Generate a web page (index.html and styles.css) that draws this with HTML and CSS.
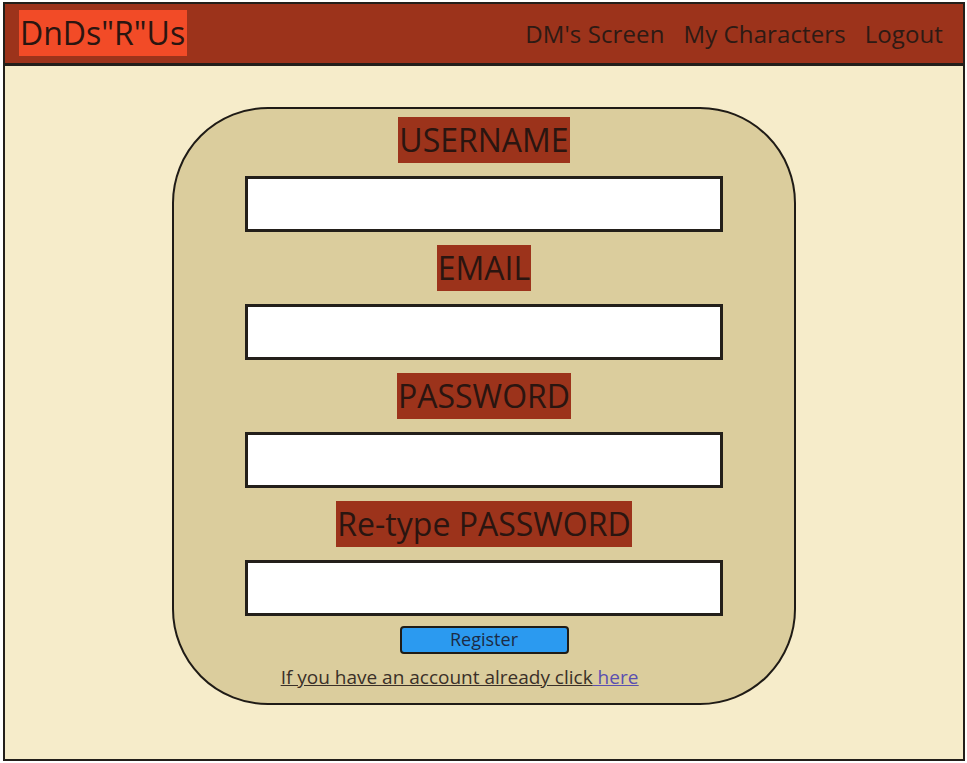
FILE: index.html
```html
<!DOCTYPE html>
<html>
<head>
<meta charset="utf-8">
<link rel="stylesheet" href="styles.css">
</head>
<body>
<div class="frame">
  <header class="topbar">
    <div class="brand">DnDs"R"Us</div>
    <nav class="nav">
      <a class="nav-link">DM's Screen</a>
      <a class="nav-link">My Characters</a>
      <a class="nav-link">Logout</a>
    </nav>
  </header>
  <main class="main">
    <form class="card">
      <div class="label">USERNAME</div>
      <input class="field" type="text">
      <div class="label">EMAIL</div>
      <input class="field" type="text">
      <div class="label">PASSWORD</div>
      <input class="field" type="password">
      <div class="label">Re-type PASSWORD</div>
      <input class="field" type="password">
      <button class="btn" type="button">Register</button>
      <p class="note">If you have an account already click<a class="here" href="#">&nbsp;here</a></p>
    </form>
  </main>
</div>
</body>
</html>
```
FILE: styles.css
```css
html, body {
  margin: 0;
  padding: 0;
  background: #ffffff;
}
body {
  font-family: "Open Sans", "Noto Sans", sans-serif;
  color: #2a1a14;
}
.frame {
  margin: 2px 0 0 3px;
  width: 962px;
  height: 759px;
  box-sizing: border-box;
  border: 2px solid #231f1a;
  background: #f6ecca;
  display: flex;
  flex-direction: column;
}
.topbar {
  height: 62px;
  box-sizing: border-box;
  background: #9c331b;
  border-bottom: 3px solid #231f1a;
  display: flex;
  align-items: flex-start;
  justify-content: space-between;
  padding: 6px 20px 0 14px;
}
.brand {
  background: #f24b27;
  font-size: 32px;
  line-height: 46px;
  height: 46px;
  padding: 0 2px 0 1px;
  color: #2a1510;
}
.nav {
  display: flex;
  gap: 19px;
  padding-top: 7px;
}
.nav-link {
  font-size: 24px;
  line-height: 34px;
  color: #2d1a14;
  text-decoration: none;
  letter-spacing: 0.1px;
}
.main {
  flex: 1;
  display: flex;
  justify-content: center;
  align-items: flex-start;
  padding-top: 41px;
}
.card {
  width: 624px;
  height: 598px;
  box-sizing: border-box;
  border: 2px solid #1f1b16;
  border-radius: 96px;
  background: #dbcd9d;
  display: flex;
  flex-direction: column;
  align-items: center;
  padding-top: 8px;
  margin: 0;
}
.label {
  background: #9c331b;
  font-size: 32px;
  line-height: 46px;
  height: 46px;
  padding: 0 1px;
  color: #2a1510;
  margin-bottom: 13px;
}
.field {
  width: 478px;
  height: 56px;
  box-sizing: border-box;
  border: 3px solid #231f1a;
  background: #ffffff;
  margin: 0 0 13px 0;
  padding: 0;
  outline: none;
}
.field:last-of-type {
  margin-bottom: 10px;
}
.btn {
  width: 169px;
  height: 28px;
  box-sizing: border-box;
  border: 2px solid #1f1b16;
  border-radius: 4px;
  background: #2b9af0;
  color: #1b2b45;
  font-family: "Open Sans", "Noto Sans", sans-serif;
  font-size: 18px;
  line-height: 22px;
  padding: 0 0 2px 0;
}
.note {
  margin: 10px 0 0 0;
  padding-right: 49px;
  font-size: 19px;
  line-height: 26px;
  color: #3a3028;
  text-decoration: underline;
}
.here {
  color: #5a4fb0;
}
```
